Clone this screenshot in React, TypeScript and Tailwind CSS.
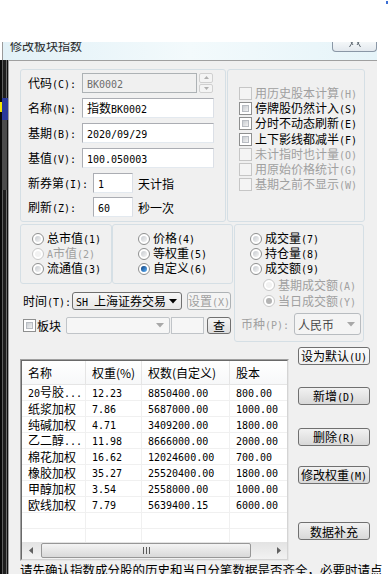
import React from "react";

const isCJK = (c: string) => /[\u2e80-\u9fff\uf900-\ufaff\uff00-\uffef\u3000-\u303f]/.test(c);

function runs(s: string) {
  const out: { c: boolean; t: string }[] = [];
  for (const ch of s) {
    const c = isCJK(ch);
    if (out.length && out[out.length - 1].c === c) out[out.length - 1].t += ch;
    else out.push({ c, t: ch });
  }
  return out;
}

function T({ s }: { s: string }) {
  return (
    <span className="whitespace-nowrap">
      {runs(s).map((r, i) =>
        r.c ? (
          <span key={i}>{r.t}</span>
        ) : (
          <span key={i} className="[font-family:'DejaVu_Sans_Mono',monospace] text-[10px]">
            {r.t}
          </span>
        )
      )}
    </span>
  );
}

function Check({ disabled }: { disabled?: boolean }) {
  return disabled ? (
    <div className="w-[13px] h-[13px] border border-[#c6c6c6] bg-[#f4f4f4] shrink-0" />
  ) : (
    <div className="w-[13px] h-[13px] border border-[#8e8f8f] bg-white p-[2px] shrink-0">
      <div className="w-full h-full border border-[#b8bcc2] bg-linear-to-br from-[#c9cdd2] to-[#f2f2f2]" />
    </div>
  );
}

function Radio({ checked, disabled }: { checked?: boolean; disabled?: boolean }) {
  return (
    <div
      className={`w-[12px] h-[12px] rounded-full border shrink-0 p-[2px] bg-white ${
        disabled ? "border-[#c8c8c8]" : "border-[#8e8f8f]"
      }`}
    >
      <div
        className={`w-full h-full rounded-full flex items-center justify-center ${
          disabled ? "bg-[#f2f2f2]" : "bg-linear-to-br from-[#c7cbd0] to-[#f4f4f4]"
        }`}
      >
        {checked && (
          <div
            className={`w-[6px] h-[6px] rounded-full ${
              disabled ? "bg-[#b4b4b4]" : "bg-linear-to-br from-[#0b3f7d] to-[#5fb6ff]"
            }`}
          />
        )}
      </div>
    </div>
  );
}

function Arrow({ disabled }: { disabled?: boolean }) {
  return (
    <svg width="8" height="5" viewBox="0 0 8 5" className="shrink-0">
      <path d="M0 0 H8 L4 4.5 Z" fill={disabled ? "#a8a8a8" : "#000"} />
    </svg>
  );
}

const editCls =
  "h-[20px] border border-[#abadb3] border-r-[#dbdfe6] border-b-[#e3e9ef] bg-white flex items-center pl-[4px] whitespace-nowrap";

const rows = [
  ["20号胶...", "12.23", "8850400.00", "800.00"],
  ["纸浆加权", "7.86", "5687000.00", "1000.00"],
  ["纯碱加权", "4.71", "3409200.00", "1800.00"],
  ["乙二醇...", "11.98", "8666000.00", "2000.00"],
  ["棉花加权", "16.62", "12024600.00", "700.00"],
  ["橡胶加权", "35.27", "25520400.00", "1800.00"],
  ["甲醇加权", "3.54", "2558000.00", "1000.00"],
  ["欧线加权", "7.79", "5639400.15", "6000.00"],
  ["", "", "", ""],
  ["", "", "", ""],
];

function Btn({ label, className }: { label: string; className: string }) {
  return (
    <div
      className={`h-[18px] w-[72px] flex items-center justify-center border border-[#707070] rounded-[3px] whitespace-nowrap leading-[13px] ${className}`}
    >
      <T s={label} />
    </div>
  );
}

function RadioRow({ label, pl, checked, disabled, h }: { label: string; pl: string; checked?: boolean; disabled?: boolean; h: string }) {
  return (
    <div className={`${pl} ${h} flex items-center gap-[3px] ${disabled ? "text-[#a0a0a0]" : ""}`}>
      <Radio checked={checked} disabled={disabled} />
      <T s={label} />
    </div>
  );
}

export default function App() {
  return (
    <div className="w-[392px] h-[574px] bg-white overflow-hidden relative [font-family:'Noto_Sans_CJK_SC',sans-serif] text-[12px] text-black leading-[13px]">
      <div className="h-[42px]" />
      <div className="absolute right-[4px] top-[1px] w-[2px] h-[3px] bg-[#3c6fd4]" />
      <div className="w-[377px] flex flex-col">
        {/* title bar */}
        <div className="h-[18px] flex">
          <div className="w-[2px]" />
          <div className="w-[1px] bg-[#9a9a9a]" />
          <div className="flex-1 flex bg-linear-to-r from-[#e2f1f7] via-[#f3fafc] to-[#e6f4f9] overflow-hidden">
            <div className="pl-[7px] -mt-[2px] text-[12px] leading-[12px] text-[#2a2a2a] whitespace-nowrap">
              修改板块指数
            </div>
            <div className="ml-auto w-[45px] h-[10px] border border-t-0 border-[#8a97a6] rounded-b-[4px] bg-linear-to-b from-[#f4f7f9] to-[#e3e9ee]">
              <svg width="45" height="9" viewBox="0 0 45 9">
                <path d="M19.5 0 L16.5 5 M24.5 0 L27.5 5 M18 0 L20 3 M26 0 L24 3" stroke="#5c6670" strokeWidth="1" fill="none" />
              </svg>
            </div>
          </div>
        </div>
        {/* body */}
        <div className="flex h-[514px]">
          <div className="w-[8px] relative flex bg-[#141414]">
            <div className="w-[2px] bg-[#0a0a0a]" />
            <div className="w-[1px] bg-[#5e5e5e]" />
            <div className="w-[3px] bg-[#1e1e1e]" />
            <div className="w-[1px] bg-[#6c6c6c]" />
            <div className="w-[1px] bg-[#101010]" />
            <div className="absolute left-[2px] top-[38px] w-[6px] h-[22px] bg-[#2a3a9a]" />
            <div className="absolute left-0 top-[42px] w-[2px] h-[10px] bg-[#f2e600]" />
            <div className="absolute left-[2px] top-[60px] w-[5px] h-[70px] bg-[#4a4a4a]" />
          </div>
          <div className="w-[369px] border-t border-l border-[#a0a0a0] bg-[#f0f0f0] flex flex-col pl-[11px] pt-[8px]">
            {/* Row A */}
            <div className="flex h-[153px]">
              <div className="w-[206px] h-[153px] border border-[#d5dfe5] rounded-[3px] flex flex-col pt-[3px]">
                <div className="flex items-center h-[20px]">
                  <div className="w-[61px] pl-[7px]"><T s="代码(C):" /></div>
                  <div className="h-[20px] w-[115px] border border-[#adb2b5] bg-[#f0f0f0] flex items-center pl-[4px] text-[#6d6d6d]">
                    <T s="BK0002" />
                  </div>
                  <div className="ml-[2px] w-[14px] h-[20px] flex flex-col gap-[1px]">
                    <div className="flex-1 border border-[#d0d0d0] rounded-[2px] bg-[#f4f4f4] flex items-center justify-center">
                      <svg width="5" height="3" viewBox="0 0 5 3"><path d="M0 3 L2.5 0 L5 3 Z" fill="#b0b0b0" /></svg>
                    </div>
                    <div className="flex-1 border border-[#d0d0d0] rounded-[2px] bg-[#f4f4f4] flex items-center justify-center">
                      <svg width="5" height="3" viewBox="0 0 5 3"><path d="M0 0 L2.5 3 L5 0 Z" fill="#b0b0b0" /></svg>
                    </div>
                  </div>
                </div>
                <div className="flex items-center h-[20px] mt-[5px]">
                  <div className="w-[61px] pl-[7px]"><T s="名称(N):" /></div>
                  <div className={`${editCls} w-[132px]`}><T s="指数BK0002" /></div>
                </div>
                <div className="flex items-center h-[20px] mt-[5px]">
                  <div className="w-[61px] pl-[7px]"><T s="基期(B):" /></div>
                  <div className={`${editCls} w-[132px]`}><T s="2020/09/29" /></div>
                </div>
                <div className="flex items-center h-[20px] mt-[5px]">
                  <div className="w-[61px] pl-[7px]"><T s="基值(V):" /></div>
                  <div className={`${editCls} w-[132px]`}><T s="100.050003" /></div>
                </div>
                <div className="flex items-center h-[20px] mt-[5px]">
                  <div className="w-[72px] pl-[7px]"><T s="新券第(I):" /></div>
                  <div className={`${editCls} w-[40px]`}><T s="1" /></div>
                  <div className="ml-[5px] whitespace-nowrap">天计指</div>
                </div>
                <div className="flex items-center h-[20px] mt-[4px]">
                  <div className="w-[72px] pl-[7px]"><T s="刷新(Z):" /></div>
                  <div className={`${editCls} w-[40px]`}><T s="60" /></div>
                  <div className="ml-[5px] whitespace-nowrap">秒一次</div>
                </div>
              </div>
              <div className="ml-[1px] w-[138px] h-[153px] border border-[#d5dfe5] rounded-[3px] flex flex-col pt-[16px] pl-[11px]">
                {[
                  ["用历史股本计算(H)", true],
                  ["停牌股仍然计入(S)", false],
                  ["分时不动态刷新(E)", false],
                  ["上下影线都减半(F)", false],
                  ["未计指时也计量(O)", true],
                  ["用原始价格统计(G)", true],
                  ["基期之前不显示(W)", true],
                ].map(([l, d], i) => (
                  <div key={i} className={`h-[15.2px] flex items-center gap-[3px] ${d ? "text-[#a0a0a0]" : ""}`}>
                    <Check disabled={d as boolean} />
                    <T s={l as string} />
                  </div>
                ))}
              </div>
            </div>
            {/* Row B */}
            <div className="flex mt-[2px]">
              <div className="w-[213px] flex flex-col">
                <div className="flex h-[60px]">
                  <div className="w-[92px] h-[60px] border border-[#d5dfe5] rounded-[3px] pt-[6px] flex flex-col">
                    <RadioRow pl="pl-[11px]" h="h-[15px]" label="总市值(1)" />
                    <RadioRow pl="pl-[11px]" h="h-[15px]" label="A市值(2)" disabled />
                    <RadioRow pl="pl-[11px]" h="h-[15px]" label="流通值(3)" />
                  </div>
                  <div className="w-[121px] h-[60px] border border-[#d5dfe5] rounded-[3px] pt-[6px] flex flex-col">
                    <RadioRow pl="pl-[25px]" h="h-[15px]" label="价格(4)" />
                    <RadioRow pl="pl-[25px]" h="h-[15px]" label="等权重(5)" />
                    <RadioRow pl="pl-[25px]" h="h-[15px]" label="自定义(6)" checked />
                  </div>
                </div>
                <div className="flex items-center h-[18px] mt-[8px]">
                  <div className="w-[52px] pl-[3px]"><T s="时间(T):" /></div>
                  <div className="w-[110px] h-[18px] border border-[#707070] rounded-[3px] bg-linear-to-b from-[#f7f7f7] to-[#e6e6e6] flex items-center pl-[3px] pr-[4px]">
                    <T s="SH 上海证券交易" />
                    <span className="ml-auto"><Arrow /></span>
                  </div>
                  <div className="ml-[5px] w-[44px] h-[18px] border border-[#adb2b5] rounded-[3px] bg-[#f4f4f4] text-[#a0a0a0] flex items-center justify-center">
                    <T s="设置(X)" />
                  </div>
                </div>
                <div className="flex items-center h-[17px] mt-[7px]">
                  <div className="ml-[3px]"><Check /></div>
                  <div className="ml-[1px] w-[29px] whitespace-nowrap">板块</div>
                  <div className="w-[104px] h-[17px] border border-[#c0c4c8] rounded-[2px] bg-[#f6f6f6] flex items-center justify-end pr-[5px]">
                    <Arrow disabled />
                  </div>
                  <div className="ml-[1px] w-[33px] h-[17px] border border-[#c0c4c8] bg-[#f6f6f6]" />
                  <div className="ml-[3px] w-[24px] h-[17px] border border-[#707070] rounded-[3px] bg-linear-to-b from-[#f5f5f5] to-[#dedede] flex items-center justify-center">
                    查
                  </div>
                </div>
              </div>
              <div className="ml-[1px] w-[130px] h-[118px] border border-[#d5dfe5] rounded-[3px] pt-[6px] flex flex-col">
                <RadioRow pl="pl-[15px]" h="h-[15px]" label="成交量(7)" />
                <RadioRow pl="pl-[15px]" h="h-[15px]" label="持仓量(8)" />
                <RadioRow pl="pl-[15px]" h="h-[15px]" label="成交额(9)" />
                <div className="h-[1px]" />
                <RadioRow pl="pl-[28px]" h="h-[16px]" label="基期成交额(A)" disabled />
                <RadioRow pl="pl-[28px]" h="h-[16px]" label="当日成交额(Y)" disabled checked />
                <div className="flex items-center mt-[4px] h-[22px] pl-[6px]">
                  <div className="w-[53px] text-[#a0a0a0]"><T s="币种(P):" /></div>
                  <div className="w-[67px] h-[22px] border border-[#b8bcc0] rounded-[3px] bg-[#f4f4f4] flex items-center pl-[3px] pr-[5px] text-[#4a4a4a]">
                    <span>人民币</span>
                    <span className="ml-auto"><Arrow disabled /></span>
                  </div>
                </div>
              </div>
            </div>
            {/* Row C */}
            <div className="flex mt-[6px]">
              <div className="mt-[11px] w-[269px] h-[202px] border border-[#a0a0a0] border-r-[#e6e6e6] border-b-[#e6e6e6]">
                <div className="w-full h-full border border-[#696969] border-r-[#d4d4d4] border-b-[#d4d4d4] bg-white flex flex-col overflow-hidden">
                  <div className="h-[24px] flex shrink-0 border-b border-[#e5e5e5] bg-linear-to-b from-white to-[#f7f8f9]">
                    <div className="w-[64px] shrink-0 pl-[6px] flex items-center border-r border-[#e5e5e5]">名称</div>
                    <div className="w-[56px] shrink-0 pl-[6px] flex items-center border-r border-[#e5e5e5] whitespace-nowrap">权重(%)</div>
                    <div className="w-[88px] shrink-0 pl-[6px] flex items-center border-r border-[#e5e5e5] whitespace-nowrap">权数(自定义)</div>
                    <div className="w-[90px] shrink-0 pl-[6px] flex items-center border-r border-[#e5e5e5]">股本</div>
                  </div>
                  <div className="h-[157px] overflow-hidden shrink-0">
                    {rows.map((r, i) => (
                      <div key={i} className="h-[16px] flex border-b border-[#f0f0f0]">
                        <div className="w-[64px] shrink-0 pl-[6px] flex items-center border-r border-[#f0f0f0]"><T s={r[0]} /></div>
                        <div className="w-[56px] shrink-0 pl-[6px] flex items-center border-r border-[#f0f0f0]"><T s={r[1]} /></div>
                        <div className="w-[88px] shrink-0 pl-[6px] flex items-center border-r border-[#f0f0f0]"><T s={r[2]} /></div>
                        <div className="w-[90px] shrink-0 pl-[6px] flex items-center border-r border-[#f0f0f0]"><T s={r[3]} /></div>
                      </div>
                    ))}
                  </div>
                  <div className="h-[17px] shrink-0 flex items-center bg-linear-to-b from-[#e3e3e3] to-[#f2f2f2]">
                    <div className="w-[17px] h-full flex items-center justify-center">
                      <svg width="4" height="7" viewBox="0 0 4 7"><path d="M4 0 L0 3.5 L4 7 Z" fill="#606060" /></svg>
                    </div>
                    <div className="ml-[2px] w-[210px] h-[15px] rounded-[2px] border border-[#979797] bg-linear-to-b from-[#f4f4f4] to-[#d9d9d9] flex items-center justify-center gap-[2px]">
                      <div className="w-[1px] h-[7px] bg-[#5a5a5a]" />
                      <div className="w-[1px] h-[7px] bg-[#5a5a5a]" />
                      <div className="w-[1px] h-[7px] bg-[#5a5a5a]" />
                    </div>
                    <div className="flex-1" />
                    <div className="w-[17px] h-full flex items-center justify-center">
                      <svg width="4" height="7" viewBox="0 0 4 7"><path d="M0 0 L4 3.5 L0 7 Z" fill="#606060" /></svg>
                    </div>
                  </div>
                </div>
              </div>
              <div className="ml-[9px] flex flex-col">
                <Btn label="设为默认(U)" className="mt-[-1px] bg-linear-to-b from-[#fbfbfb] to-[#efefef]" />
                <Btn label="新增(D)" className="mt-[22px] bg-linear-to-b from-[#f2f2f2] to-[#d8d8d8]" />
                <Btn label="删除(R)" className="mt-[23px] bg-linear-to-b from-[#f2f2f2] to-[#d8d8d8]" />
                <Btn label="修改权重(M)" className="mt-[20px] bg-linear-to-b from-[#f2f2f2] to-[#d8d8d8]" />
                <Btn label="数据补充" className="mt-[38px] bg-linear-to-b from-[#f2f2f2] to-[#d8d8d8]" />
              </div>
            </div>
            <div className="mt-[2px] whitespace-nowrap text-[12.5px] leading-[14px]">
              请先确认指数成分股的历史和当日分笔数据是否齐全，必要时请点
            </div>
          </div>
        </div>
      </div>
    </div>
  );
}
